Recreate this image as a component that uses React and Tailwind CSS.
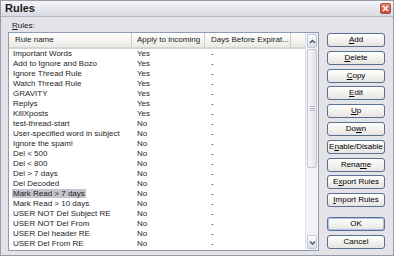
import React from 'react';

const rules = [
    ['Important Words', 'Yes'],
    ['Add to Ignore and Bozo', 'Yes'],
    ['Ignore Thread Rule', 'Yes'],
    ['Watch Thread Rule', 'Yes'],
    ['GRAVITY', 'Yes'],
    ['Replys', 'Yes'],
    ['KillXposts', 'Yes'],
    ['test-thread-start', 'No'],
    ['User-specified word in subject', 'No'],
    ['Ignore the spam!', 'No'],
    ['Del < 500', 'No'],
    ['Del < 800', 'No'],
    ['Del > 7 days', 'No'],
    ['Del Decoded', 'No'],
    ['Mark Read > 7 days', 'No'],
    ['Mark Read > 10 days', 'No'],
    ['USER NOT Del Subject RE', 'No'],
    ['USER NOT Del From', 'No'],
    ['USER Del header RE', 'No'],
    ['USER Del From RE', 'No'],
];

// label with one underlined access key
const Key = ({ text, at }) => (
    <>
        {text.slice(0, at)}
        <span className="underline">{text[at]}</span>
        {text.slice(at + 1)}
    </>
);

const Btn = ({ children, def, className = '' }) => (
    <button
        className={
            'h-[14px] w-[58px] rounded-[3px] border border-[#5a6f93] bg-gradient-to-b from-white to-[#e6e5e0] text-[8px] leading-[12px] text-black ' +
            (def ? 'shadow-[inset_0_0_0_1px_#a9c4ee] ' : '') +
            className
        }
    >
        {children}
    </button>
);

export default function App() {
    const selected = 14;

    return (
        <div
            className="w-[394px] h-[256px] flex flex-col bg-[#e4e3e8] border border-[#9a9aa8] overflow-hidden"
            style={{ fontFamily: '"Liberation Sans", Arial, sans-serif' }}
        >
            {/* title bar */}
            <div className="h-[16px] shrink-0 flex items-center justify-between pl-[4px] pr-[2px] bg-gradient-to-b from-[#f6f6f9] to-[#d9d9e2] border-b border-[#b4b4c0]">
                <span className="text-[11px] font-bold text-[#1a1a1a] leading-none">Rules</span>
                <div className="w-[11px] h-[11px] rounded-[2px] bg-gradient-to-b from-[#e98a78] to-[#c8442c] border border-[#a8503e] flex items-center justify-center">
                    <svg width="7" height="7" viewBox="0 0 7 7">
                        <path d="M1 1L6 6M6 1L1 6" stroke="white" strokeWidth="1.4" />
                    </svg>
                </div>
            </div>

            <div className="flex flex-1 pl-[7px] pr-[6px]">
                {/* left side: label + list */}
                <div className="flex flex-col">
                    <div className="h-[15px] pl-[4px] pt-[4px] text-[8px] leading-[9px] text-[#222]">
                        <Key text="Rules:" at={0} />
                    </div>
                    <div className="w-[311px] h-[219px] bg-white border border-[#8d9bb3] flex">
                        <div className="flex-1 flex flex-col">
                            {/* header */}
                            <div className="h-[16px] flex text-[8px] text-[#222] bg-gradient-to-b from-white to-[#ebeae6] border-b-2 border-[#d6d5cf]">
                                <div className="w-[123px] pl-[6px] flex items-center border-r border-[#cfcdc5]">Rule name</div>
                                <div className="w-[73px] pl-[5px] flex items-center border-r border-[#cfcdc5]">Apply to incoming</div>
                                <div className="w-[86px] pl-[6px] flex items-center border-r border-[#cfcdc5]">Days Before Expirat...</div>
                                <div className="flex-1" />
                            </div>
                            {/* rows */}
                            <div className="flex flex-col text-[8px] text-[#1e1e1e]">
                                {rules.map(([name, inc], i) => (
                                    <div key={name} className="h-[10px] flex items-center leading-[10px]">
                                        <div className="w-[123px] pl-[3px]">
                                            <span className={i === selected ? 'bg-[#c4c4cc] px-[1px]' : 'px-[1px]'}>{name}</span>
                                        </div>
                                        <div className="w-[73px] pl-[5px]">{inc}</div>
                                        <div className="pl-[6px]">-</div>
                                    </div>
                                ))}
                            </div>
                        </div>
                        {/* scrollbar */}
                        <div className="w-[13px] flex flex-col bg-[#f3f3f5] border-l border-[#e0e0e6]">
                            <div className="h-[14px] m-[1px] rounded-[2px] border border-[#c3c6d4] bg-gradient-to-b from-white to-[#dcdde6] flex items-center justify-center">
                                <svg width="7" height="5" viewBox="0 0 7 5">
                                    <path d="M1 4L3.5 1.5L6 4" fill="none" stroke="#4d5166" strokeWidth="1.4" />
                                </svg>
                            </div>
                            <div className="h-[119px] mx-[1px] rounded-[2px] border border-[#c3c6d4] bg-gradient-to-r from-[#f7f7fa] to-[#e2e3ea] flex flex-col items-center justify-center gap-[1px]">
                                <div className="w-[5px] h-[1px] bg-[#b8bac8]" />
                                <div className="w-[5px] h-[1px] bg-[#b8bac8]" />
                                <div className="w-[5px] h-[1px] bg-[#b8bac8]" />
                            </div>
                            <div className="flex-1" />
                            <div className="h-[14px] m-[1px] rounded-[2px] border border-[#c3c6d4] bg-gradient-to-b from-white to-[#dcdde6] flex items-center justify-center">
                                <svg width="7" height="5" viewBox="0 0 7 5">
                                    <path d="M1 1.5L3.5 4L6 1.5" fill="none" stroke="#4d5166" strokeWidth="1.4" />
                                </svg>
                            </div>
                        </div>
                    </div>
                </div>

                {/* buttons */}
                <div className="ml-[8px] pt-[16px] flex flex-col gap-[3.8px]">
                    <Btn><Key text="Add" at={0} /></Btn>
                    <Btn><Key text="Delete" at={0} /></Btn>
                    <Btn><Key text="Copy" at={0} /></Btn>
                    <Btn><Key text="Edit" at={0} /></Btn>
                    <Btn><Key text="Up" at={0} /></Btn>
                    <Btn><Key text="Down" at={2} /></Btn>
                    <Btn><Key text="Enable/Disable" at={1} /></Btn>
                    <Btn><Key text="Rename" at={4} /></Btn>
                    <Btn><Key text="Export Rules" at={1} /></Btn>
                    <Btn><Key text="Import Rules" at={0} /></Btn>
                    <Btn def className="mt-[6px]">OK</Btn>
                    <Btn>Cancel</Btn>
                </div>
            </div>
        </div>
    );
}
